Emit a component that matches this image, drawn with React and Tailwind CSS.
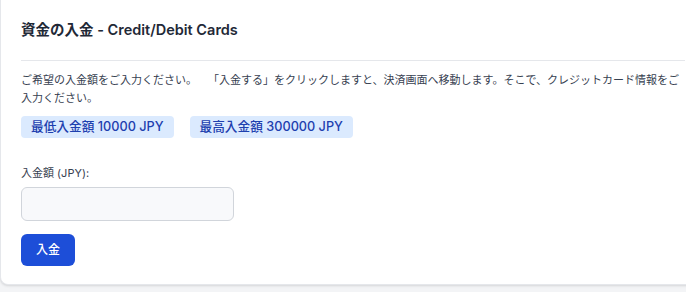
import React from "react";

function Badge({ children }) {
  return (
    <span className="inline-flex h-[22px] items-center rounded bg-[#dbeafe] px-[10px] text-[12.7px] font-medium text-[#1e40af]">
      {children}
    </span>
  );
}

export default function App() {
  return (
    <div
      className="h-[292px] w-[686px] overflow-hidden bg-[#f3f4f6] [text-spacing-trim:space-all]"
      style={{ fontFamily: 'Inter, "Noto Sans CJK JP", sans-serif' }}
    >
      <div className="w-[706px] rounded-b-lg border-x border-b border-[#e5e7eb] bg-white px-5 pb-[18px] shadow-sm">
        {/* Header */}
        <div className="h-[61px] border-b border-[#e5e7eb] pt-5">
          <h2 className="text-[14.5px] font-semibold leading-5 text-[#1f2937]">
            資金の入金 - Credit/Debit Cards
          </h2>
        </div>

        {/* Description */}
        <p className="mt-[10px] text-[11px] leading-[18px] text-[#374151]">
          ご希望の入金額をご入力ください。　「入金する」をクリックしますと、決済画面へ移動します。そこで、クレジットカード情報をご入力ください。
        </p>

        {/* Limits */}
        <div className="mt-[9px] flex gap-4">
          <Badge>最低入金額 10000 JPY</Badge>
          <Badge>最高入金額 300000 JPY</Badge>
        </div>

        {/* Amount form */}
        <label className="mt-[27px] block text-[11px] leading-4 text-[#374151]">
          入金額 (JPY):
        </label>
        <input
          type="text"
          className="mt-[6px] block h-[34px] w-[213px] rounded-md border border-[#d1d5db] bg-[#f8f9fb] px-3 text-[12px] outline-none"
        />
        <button className="mt-[13px] block h-8 w-[54px] rounded-md bg-[#1d4ed8] text-[12px] font-medium text-white">
          入金
        </button>
      </div>
    </div>
  );
}
